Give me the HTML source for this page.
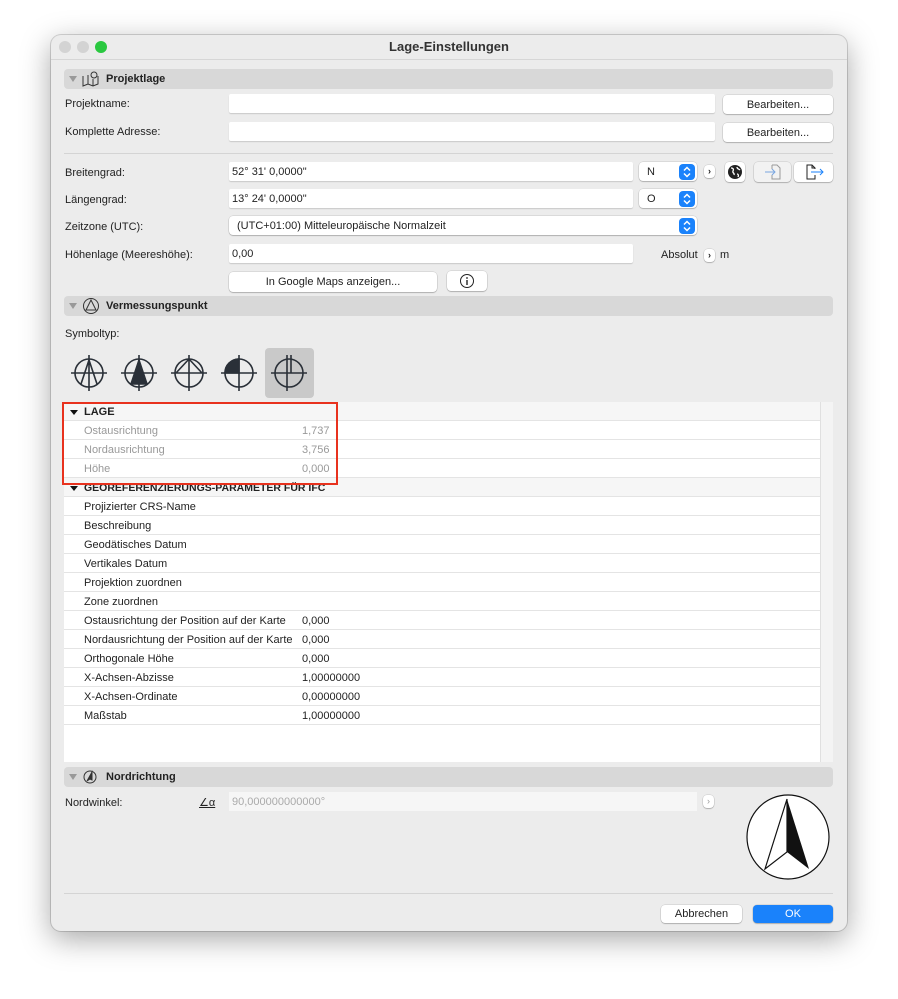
<!DOCTYPE html>
<html><head><meta charset="utf-8"><style>
*{box-sizing:border-box;margin:0;padding:0}
body{width:898px;height:999px;background:#fff;font-family:"Liberation Sans",sans-serif;font-size:11px;color:#222;position:relative;overflow:hidden}
.win{position:absolute;left:51px;top:35px;width:796px;height:896px;background:#ececec;border-radius:10px;box-shadow:0 8px 30px rgba(0,0,0,.35),0 0 0 1px rgba(0,0,0,.15);overflow:hidden}
.a{position:absolute}
.tb{left:0;top:0;width:796px;height:25px;border-bottom:1px solid #d6d6d6;text-align:center;font-weight:bold;font-size:13px;line-height:24px;color:#333}
.dot{width:12px;height:12px;border-radius:6px;top:6px}
.sec{left:13px;width:769px;height:20px;background:#d8d8d8;border-radius:4px;font-weight:bold;font-size:11px;line-height:20px;padding-left:42px}
.tri{position:absolute;left:5px;top:7px;width:0;height:0;border-left:4px solid transparent;border-right:4px solid transparent;border-top:6px solid #999}
.in{background:#fff;height:19px;box-shadow:0 1px 1px rgba(0,0,0,.15);border-radius:2px;line-height:20px;padding-left:3px}
.btn{background:#fff;height:19px;border-radius:4px;box-shadow:0 0 0 .5px rgba(0,0,0,.15),0 1px 1px rgba(0,0,0,.2);text-align:center;line-height:20px}
.sel{width:16px;height:16px;background:#1a82fb;border-radius:4px;top:1.5px;right:2px;position:absolute}
.lbl{left:14px}
.row{position:absolute;left:0;width:756px;height:19px;border-bottom:1px solid #e4e4e4;line-height:21px}
.row span{position:absolute;left:20px}
.row b{position:absolute;left:238px;font-weight:normal}
.g{color:#999}
</style></head><body>
<svg width="0" height="0" style="position:absolute"><defs><symbol id="chv" viewBox="0 0 16 16"><path d="M5 6.5L8 3.5L11 6.5M5 9.5L8 12.5L11 9.5" fill="none" stroke="#fff" stroke-width="1.5"/></symbol></defs></svg>
<div class="win">
<div class="a tb">Lage-Einstellungen</div>
<div class="a dot" style="left:8px;background:#d3d3d3"></div>
<div class="a dot" style="left:26px;background:#d3d3d3"></div>
<div class="a dot" style="left:44px;background:#2ac840"></div>

<div class="a sec" style="top:34px"><i class="tri"></i><svg class="a" style="left:18px;top:2px" width="18" height="16" viewBox="0 0 18 16" fill="none" stroke="#333" stroke-width="1"><path d="M1 5v10l5-2 5 2 5-2V5M6 4v9M11 8v7"/><circle cx="12" cy="4" r="3"/></svg>Projektlage</div>
<div class="a lbl" style="top:63px">Projektname:</div>
<div class="a in" style="left:178px;top:59px;width:486px"></div>
<div class="a btn" style="left:672px;top:60px;width:110px">Bearbeiten...</div>
<div class="a lbl" style="top:91px">Komplette Adresse:</div>
<div class="a in" style="left:178px;top:87px;width:486px"></div>
<div class="a btn" style="left:672px;top:88px;width:110px">Bearbeiten...</div>
<div class="a" style="left:13px;top:118px;width:769px;height:1px;background:#d4d4d4"></div>

<div class="a lbl" style="top:132px">Breitengrad:</div>
<div class="a in" style="left:178px;top:127px;width:404px">52° 31' 0,0000"</div>
<div class="a btn" style="left:588px;top:127px;width:58px;text-align:left;padding-left:8px">N<svg class="sel"><use href="#chv"/></svg></div>
<div class="a btn" style="left:653px;top:130px;width:11px;height:13px;line-height:13px;font-size:9px;font-weight:bold">›</div>
<div class="a btn" style="left:674px;top:127px;width:20px;height:20px"><svg width="16" height="16" style="margin-top:2px" viewBox="0 0 16 16"><circle cx="8" cy="8" r="7" fill="#222"/><path d="M4 4c2 0 3 1 2 3s2 2 1 4M10 3c0 2 2 2 3 3M10 10c1 0 2 1 1 3" stroke="#fff" stroke-width="1.3" fill="none"/></svg></div>
<div class="a btn" style="left:703px;top:127px;width:37px;height:20px;background:#f2f2f2"><svg width="20" height="18" style="margin-top:1px" viewBox="0 0 20 18" fill="none"><path d="M9 2h5l3 3v11H9V12M9 6V2" stroke="#999"/><path d="M2 9h10M9 6l3 3-3 3" stroke="#7aa6e0"/></svg></div>
<div class="a btn" style="left:743px;top:127px;width:39px;height:20px"><svg width="22" height="18" style="margin-top:1px" viewBox="0 0 22 18" fill="none"><path d="M12 6V5l-3-3H4v14h8V12M9 2v3h3" stroke="#222"/><path d="M8 9h12M17 6l3 3-3 3" stroke="#1a82fb"/></svg></div>

<div class="a lbl" style="top:159px">Längengrad:</div>
<div class="a in" style="left:178px;top:154px;width:404px">13° 24' 0,0000"</div>
<div class="a btn" style="left:588px;top:154px;width:58px;text-align:left;padding-left:8px">O<svg class="sel"><use href="#chv"/></svg></div>

<div class="a lbl" style="top:186px">Zeitzone (UTC):</div>
<div class="a btn" style="left:178px;top:181px;width:468px;text-align:left;padding-left:8px">(UTC+01:00) Mitteleuropäische Normalzeit<svg class="sel"><use href="#chv"/></svg></div>

<div class="a lbl" style="top:214px">Höhenlage (Meereshöhe):</div>
<div class="a in" style="left:178px;top:209px;width:404px">0,00</div>
<div class="a" style="left:610px;top:214px">Absolut</div>
<div class="a btn" style="left:653px;top:214px;width:11px;height:13px;line-height:13px;font-size:9px;font-weight:bold">›</div>
<div class="a" style="left:669px;top:214px">m</div>

<div class="a btn" style="left:178px;top:237px;width:208px;height:20px;line-height:21px">In Google Maps anzeigen...</div>
<div class="a btn" style="left:396px;top:236px;width:40px;height:20px"><svg width="16" height="16" style="margin-top:2px" viewBox="0 0 16 16"><circle cx="8" cy="8" r="6.5" fill="none" stroke="#222"/><rect x="7.3" y="7" width="1.4" height="5" fill="#222"/><circle cx="8" cy="5" r=".9" fill="#222"/></svg></div>

<div class="a sec" style="top:261px"><i class="tri"></i><svg class="a" style="left:18px;top:1px" width="18" height="18" viewBox="0 0 18 18" fill="none" stroke="#333"><circle cx="9" cy="9" r="7.5"/><path d="M9 3L4 13h10z"/></svg>Vermessungspunkt</div>
<div class="a lbl" style="top:293px">Symboltyp:</div>
<div class="a" style="left:214px;top:313px;width:49px;height:50px;background:#c9c9c9;border-radius:4px"></div>
<svg class="a" style="left:14px;top:318px" width="260" height="40" viewBox="0 0 260 40" fill="none" stroke="#2a3038" stroke-width="1.6">
<g transform="translate(24,20)"><circle r="14"/><path d="M-18 0h36M0-18v36M0-13L-8 11M0-13L8 11"/></g>
<g transform="translate(74,20)"><circle r="14"/><path d="M-18 0h36M0-18v36"/><path d="M0-13L-8 11H8z" fill="#2a3038"/></g>
<g transform="translate(124,20)"><circle r="14"/><path d="M-18 0h36M0-18v36M-13 0L0-14L13 0"/></g>
<g transform="translate(174,20)"><circle r="14"/><path d="M-18 0h36M0-18v36"/><path d="M0-14A14 14 0 0 0-14 0H0z" fill="#2a3038"/></g>
<g transform="translate(224,20)"><circle r="14"/><path d="M-18 0h36M-2-18v36M2-18v18"/></g>
</svg>

<div class="a" style="left:13px;top:367px;width:756px;height:360px;background:#fff">
<div class="row" style="top:0;background:#f6f6f6;font-weight:bold;padding-left:20px"><i class="a" style="left:6px;top:8px;border-left:4px solid transparent;border-right:4px solid transparent;border-top:5px solid #111"></i>LAGE</div>
<div class="row g" style="top:19px"><span>Ostausrichtung</span><b>1,737</b></div>
<div class="row g" style="top:38px"><span>Nordausrichtung</span><b>3,756</b></div>
<div class="row g" style="top:57px"><span>Höhe</span><b>0,000</b></div>
<div class="row" style="top:76px;background:#f6f6f6;font-weight:bold;padding-left:20px;font-size:10.5px"><i class="a" style="left:6px;top:8px;border-left:4px solid transparent;border-right:4px solid transparent;border-top:5px solid #111"></i>GEOREFERENZIERUNGS-PARAMETER FÜR IFC</div>
<div class="row" style="top:95px"><span>Projizierter CRS-Name</span></div>
<div class="row" style="top:114px"><span>Beschreibung</span></div>
<div class="row" style="top:133px"><span>Geodätisches Datum</span></div>
<div class="row" style="top:152px"><span>Vertikales Datum</span></div>
<div class="row" style="top:171px"><span>Projektion zuordnen</span></div>
<div class="row" style="top:190px"><span>Zone zuordnen</span></div>
<div class="row" style="top:209px"><span>Ostausrichtung der Position auf der Karte</span><b>0,000</b></div>
<div class="row" style="top:228px"><span>Nordausrichtung der Position auf der Karte</span><b>0,000</b></div>
<div class="row" style="top:247px"><span>Orthogonale Höhe</span><b>0,000</b></div>
<div class="row" style="top:266px"><span>X-Achsen-Abzisse</span><b>1,00000000</b></div>
<div class="row" style="top:285px"><span>X-Achsen-Ordinate</span><b>0,00000000</b></div>
<div class="row" style="top:304px"><span>Maßstab</span><b>1,00000000</b></div>
</div>
<div class="a" style="left:769px;top:367px;width:13px;height:360px;background:#f4f4f4;border-left:1px solid #e0e0e0"></div>
<div class="a" style="left:11px;top:367px;width:276px;height:83px;border:2px solid #e8321e"></div>

<div class="a sec" style="top:732px"><i class="tri"></i><svg class="a" style="left:18px;top:2px" width="16" height="16" viewBox="0 0 16 16" fill="none" stroke="#333"><circle cx="8" cy="8" r="6"/><path d="M10 3L5 12l3-2 2 1z" fill="#333"/></svg>Nordrichtung</div>
<div class="a lbl" style="top:762px">Nordwinkel:</div>
<div class="a" style="left:148px;top:761px;font-size:11px;text-decoration:underline">∠α</div>
<div class="a" style="left:178px;top:757px;width:468px;height:19px;background:#f6f6f6;color:#aaa;line-height:20px;padding-left:3px">90,000000000000°</div>
<div class="a btn" style="left:652px;top:760px;width:11px;height:13px;line-height:13px;font-size:9px;color:#999">›</div>
<svg class="a" style="left:694px;top:759px" width="86" height="86" viewBox="0 0 86 86"><ellipse cx="43" cy="43" rx="41" ry="42" fill="#fff" stroke="#111" stroke-width="1.2"/><path d="M42 5L20 75L42 58z" fill="#fff" stroke="#111" stroke-width="1.2"/><path d="M42 5L64 75L42 58z" fill="#111"/></svg>

<div class="a" style="left:13px;top:858px;width:769px;height:1px;background:#d4d4d4"></div>
<div class="a btn" style="left:610px;top:870px;width:81px;height:18px;line-height:19px">Abbrechen</div>
<div class="a btn" style="left:702px;top:870px;width:80px;height:18px;line-height:19px;background:#1a82fb;color:#fff">OK</div>
</div>
</body></html>
